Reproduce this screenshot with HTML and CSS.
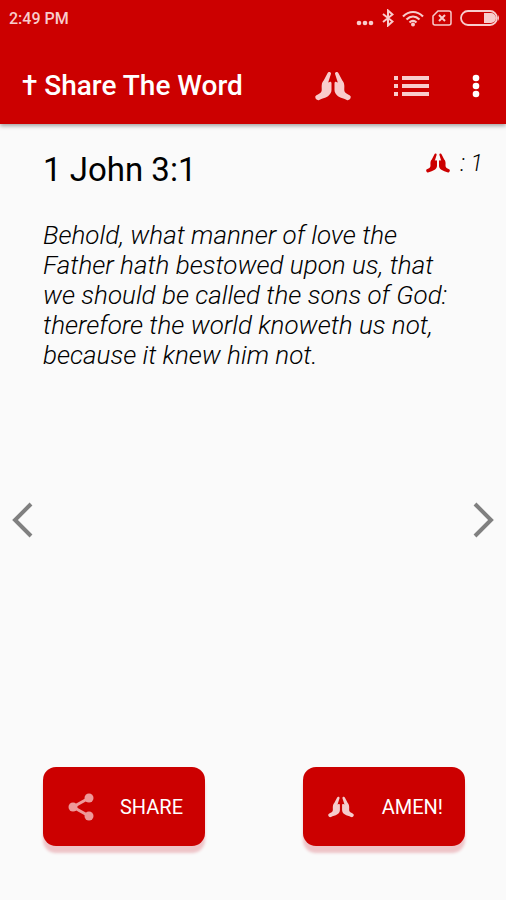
FILE: index.html
```html
<!DOCTYPE html>
<html lang="en">
  <head>
    <meta charset="UTF-8" />
    <meta name="viewport" content="width=device-width, initial-scale=1.0" />
    <title>Share The Word</title>
    <link rel="stylesheet" href="styles.css">
  </head>
  <body>
    <!-- Shared icon -->
    <svg class="sprite" aria-hidden="true">
      <symbol id="hands" viewBox="0 0 36 30">
        <g id="hand">
          <path d="M12.500 2.200C13.300.2 16.200.6 16 2.800L13.200 11.500 14 11.300C15.400 10.200 16.500 10.700 16.500 12.400V19C16.500 21.500 15.200 23.400 13 25.200 10 27.300 6.800 27.400 4.200 29 2 30-.3 27.300.4 25.300 1.300 23.600 4.400 23.400 5.800 21.600 7.300 19.800 6.500 17.500 6.700 14.600 6.900 11.300 7.900 10.700 8.700 9.600Z" />
        </g>
        <use href="#hand" transform="translate(36 0) scale(-1 1)" />
      </symbol>
    </svg>

    <header class="header">
      <div class="status">
        <span class="time">2:49 PM</span>
        <div class="status-icons">
          <svg width="18" height="6" viewBox="0 0 18 6" fill="currentColor">
            <circle cx="3" cy="3" r="2.300" />
            <circle cx="9" cy="3" r="2.300" />
            <circle cx="15" cy="3" r="2.300" />
          </svg>
          <svg class="bluetooth" width="12" height="18" viewBox="0 0 12 18" fill="none" stroke="currentColor" stroke-width="2">
            <path d="M1 5 10.500 12.500 6 16.500V1.500L10.500 5.500 1 13" />
          </svg>
          <svg class="wifi" width="22" height="17" viewBox="0 0 22 17" fill="none" stroke="currentColor" stroke-width="2.200">
            <path d="M1 6.500C7 .5 15 .5 21 6.500M4.500 9.500C8.500 5.700 13.500 5.700 17.500 9.500M7.500 12.500C9.700 10.500 12.300 10.500 14.500 12.500" />
            <circle cx="11" cy="14.500" r="2" fill="currentColor" stroke="none" />
          </svg>
          <svg class="sim" width="20" height="16" viewBox="0 0 20 16" fill="none" stroke="currentColor">
            <path d="M6 1H17Q19 1 19 3V13Q19 15 17 15H3Q1 15 1 13V6Z" stroke-width="1.500" />
            <path d="M7 5 13 11M13 5 7 11" stroke-width="2" />
          </svg>
          <svg class="battery" width="40" height="16" viewBox="0 0 40 16">
            <rect x="1" y="1" width="36" height="14" rx="7" fill="none" stroke="currentColor" stroke-width="1.800" />
            <path d="M24 3H31A5 5 0 0 1 31 13H24ZM38 5Q40 8 38 11Z" fill="currentColor" />
          </svg>
        </div>
      </div>

      <div class="toolbar">
        <h1>† Share The Word</h1>
        <button class="tool tool-amen" aria-label="Amens">
          <svg width="36" height="30"><use href="#hands" /></svg>
        </button>
        <button class="tool tool-list" aria-label="List">
          <svg width="35" height="22" viewBox="0 0 35 22" fill="currentColor">
            <path d="M0 1H4V5H0ZM0 9H4V13H0ZM0 17H4V21H0ZM8 1H35V5H8ZM8 9H35V13H8ZM8 17H35V21H8Z" />
          </svg>
        </button>
        <button class="tool tool-more" aria-label="More options">
          <svg width="8" height="24" viewBox="0 0 8 24" fill="currentColor">
            <circle cx="4" cy="4" r="3.300" />
            <circle cx="4" cy="12" r="3.300" />
            <circle cx="4" cy="20" r="3.300" />
          </svg>
        </button>
      </div>
    </header>

    <main class="content">
      <div class="verse-head">
        <h2>1 John 3:1</h2>
        <div class="count">
          <svg width="24" height="20"><use href="#hands" /></svg>
          <span>: 1</span>
        </div>
      </div>
      <p class="verse">Behold, what manner of love the Father hath bestowed upon us, that we should be called the sons of God: therefore the world knoweth us not, because it knew him not.</p>

      <div class="pager">
        <button class="arrow" aria-label="Previous verse">
          <svg width="22" height="36" viewBox="0 0 22 36">
            <path d="M20 2 4 18 20 34" />
          </svg>
        </button>
        <button class="arrow" aria-label="Next verse">
          <svg width="22" height="36" viewBox="0 0 22 36">
            <path d="M2 2 18 18 2 34" />
          </svg>
        </button>
      </div>

      <div class="actions">
        <button class="btn">
          <svg class="share" width="26" height="28" viewBox="0 0 26 28">
            <path d="M21 5 5 14 21 23" fill="none" stroke="currentColor" stroke-width="3" />
            <g fill="currentColor">
              <circle cx="21" cy="5" r="4.500" />
              <circle cx="5" cy="14" r="4.500" />
              <circle cx="21" cy="23" r="4.500" />
            </g>
          </svg>
          <span>SHARE</span>
        </button>
        <button class="btn">
          <svg class="amen" width="26" height="22"><use href="#hands" /></svg>
          <span>AMEN!</span>
        </button>
      </div>
    </main>
  </body>
</html>
```
FILE: styles.css
```css
* {
  box-sizing: border-box;
}

body {
  font-family: Roboto, sans-serif;
  margin: 0;
  min-height: 100vh;
  display: flex;
  flex-direction: column;
  background-color: #fafafa;
  color: #000000;
}

button {
  font-family: inherit;
  border: none;
  padding: 0;
  cursor: pointer;
}

svg {
  display: block;
}

.sprite {
  display: none;
}

.header {
  background-color: #cc0000;
  color: #ffffff;
  box-shadow: 0 2px 4px rgba(0, 0, 0, 0.35);
}

.status {
  display: flex;
  justify-content: space-between;
  align-items: center;
  height: 36px;
  padding: 0 6px 0 9px;
  color: #f8cccc;
}

.time {
  font-size: 16px;
  font-weight: 500;
}

.status-icons {
  display: flex;
  align-items: center;
  gap: 8px;
}

.status-icons svg:first-child {
  margin-top: 10px;
}

.toolbar {
  display: flex;
  align-items: center;
  height: 88px;
  padding: 11px 26px 0 22px;
}

.toolbar h1 {
  flex: 1;
  margin: 0;
  font-size: 28px;
  font-weight: 500;
}

.tool {
  background: none;
  color: #ffffff;
}

.tool-amen {
  color: #f9cccc;
  fill: currentColor;
}

.tool-list {
  margin: 0 43px;
  color: #f9cccc;
}

.content {
  flex: 1;
  display: flex;
  flex-direction: column;
  padding: 26px 0 54px;
}

.verse-head {
  display: flex;
  justify-content: space-between;
  padding: 0 23px 0 43px;
}

.verse-head h2 {
  margin: 0;
  font-size: 33px;
  font-weight: 400;
  line-height: 40px;
}

.count {
  display: flex;
  align-items: center;
  gap: 10px;
  height: 26px;
  font-size: 23px;
  font-style: italic;
  font-weight: 300;
}

.count svg {
  fill: #cc0000;
}

.verse {
  margin: 30px 50px 0 43px;
  font-size: 26px;
  font-style: italic;
  font-weight: 300;
  line-height: 30px;
}

.pager {
  flex: 1;
  display: flex;
  justify-content: space-between;
  align-items: center;
  padding: 0 11px;
  margin-bottom: 98px;
}

.arrow {
  background: none;
}

.arrow path {
  fill: none;
  stroke: #808080;
  stroke-width: 4;
}

.actions {
  display: flex;
  justify-content: space-between;
  padding: 0 41px 0 43px;
}

.btn {
  display: flex;
  align-items: center;
  justify-content: space-between;
  width: 162px;
  height: 79px;
  padding: 0 22px 0 25px;
  border-radius: 13px;
  background-color: #cc0000;
  color: #ffffff;
  font-size: 20px;
  box-shadow: 0 7px 3px #eec4c8;
}

.btn svg {
  color: #ee9999;
  fill: #f5cccc;
}
```
